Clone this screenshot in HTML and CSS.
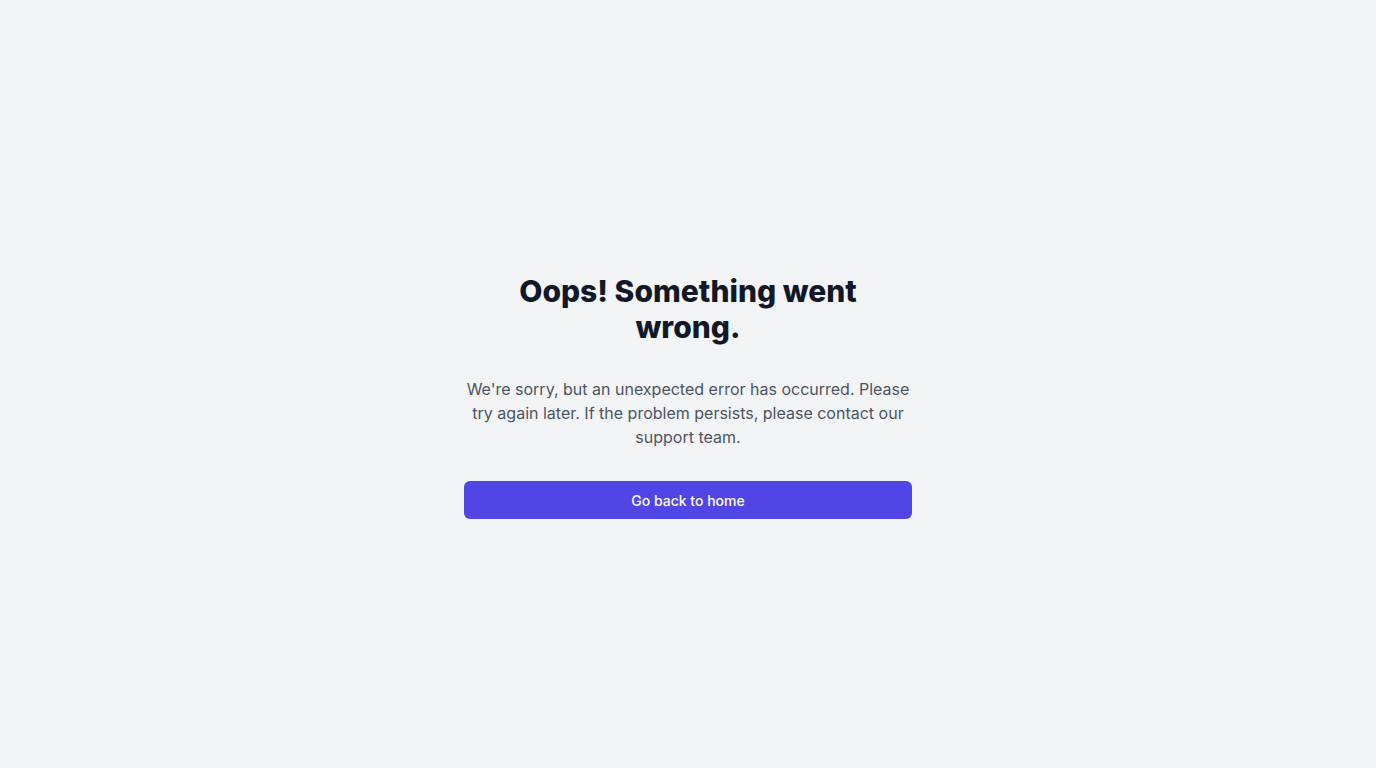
FILE: index.html
```html
<!DOCTYPE html>
<html lang="en">
<head>
<meta charset="utf-8">
<title>Error</title>
<link rel="stylesheet" href="styles.css">
</head>
<body>
<main class="page">
  <div class="card">
    <h1 class="title">Oops! Something went wrong.</h1>
    <p class="message">We're sorry, but an unexpected error has occurred. Please try again later. If the problem persists, please contact our support team.</p>
    <a class="button" href="#">Go back to home</a>
  </div>
</main>
</body>
</html>
```

FILE: styles.css
```css
* { box-sizing: border-box; }
html, body { margin: 0; padding: 0; }
body {
  background: #f3f4f6;
  font-family: Inter, "Noto Sans", sans-serif;
  -webkit-font-smoothing: antialiased;
}
.page {
  min-height: 768px;
  display: flex;
  align-items: center;
  justify-content: center;
  padding-top: 24px;
}
.card {
  width: 448px;
  text-align: center;
}
.title {
  margin: 0 auto;
  max-width: 400px;
  font-size: 30px;
  line-height: 36px;
  font-weight: 800;
  color: #111827;
}
.message {
  margin: 32px 0 0;
  font-size: 16px;
  line-height: 24px;
  color: #4b5563;
}
.button {
  display: flex;
  align-items: center;
  justify-content: center;
  margin-top: 32px;
  height: 38px;
  border-radius: 6px;
  background: #4f46e5;
  color: #ffffff;
  font-size: 14px;
  font-weight: 500;
  text-decoration: none;
}
```
